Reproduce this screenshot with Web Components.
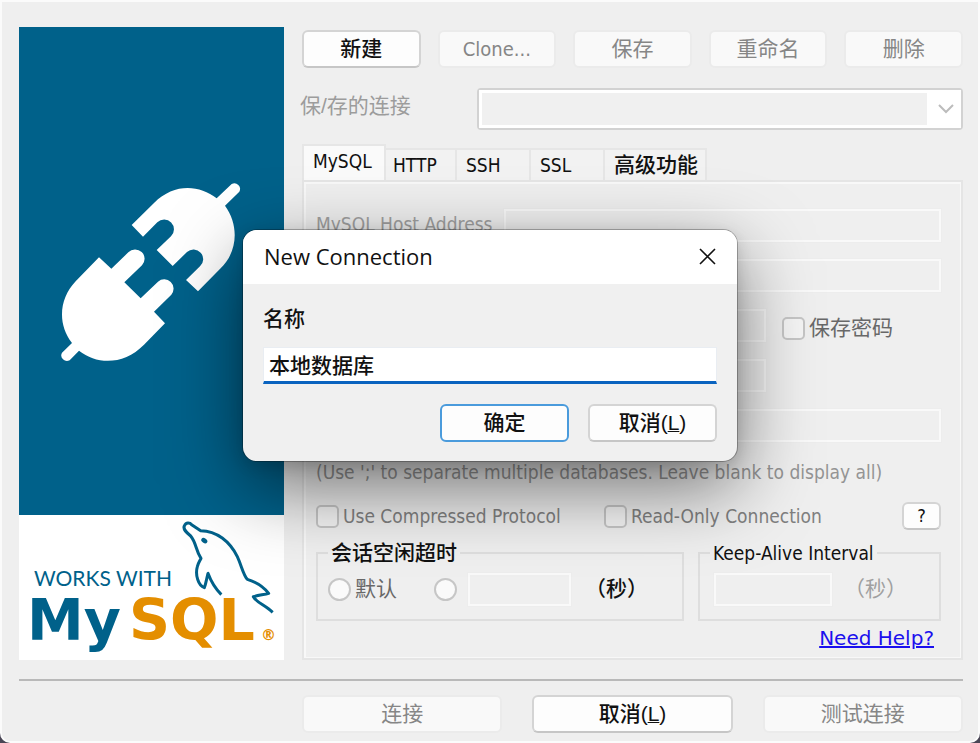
<!DOCTYPE html>
<html lang="zh-CN">
<head>
<meta charset="utf-8">
<title>MySQL Connection</title>
<style>
  html { background: #4a4655; }
  body { margin: 0; font: 19px/24px "DejaVu Sans Condensed", "Noto Sans CJK SC", sans-serif; color: #111; }
</style>
</head>
<body>
<connection-window></connection-window>
<script>
const define = (name, html, setup) => customElements.define(name, class extends HTMLElement {
  constructor() {
    super();
    const t = document.createElement('template');
    t.innerHTML = html;
    this.attachShadow({ mode: 'open' }).append(t.content.cloneNode(true));
  }
  connectedCallback() { if (setup) setup(this, this.shadowRoot); }
});
const cjk = '"Liberation Sans", "Noto Sans CJK SC", sans-serif';

define('push-button', `
<style>
  :host { display: block; }
  button { box-sizing: border-box; width: 100%; height: 38px; padding: 0; display: block;
    border: 2px solid #d4d4d4; border-bottom-color: #c6c6c6; border-radius: 6px; background: #fdfdfd;
    font-family: ${cjk}; font-size: 21px; font-weight: 500; line-height: 34px; color: #111; }
  button:disabled { background: #f9f9f9; border-color: #ebebeb; color: #868686; font-weight: 400; }
  :host([latin]) button { font-family: inherit; font-size: 20px; line-height: 32px; }
  :host([primary]) button { border-color: #4a9bdc; }
  :host([small]) button { height: 28px; line-height: 24px; font-family: inherit; font-size: 18px; }
</style>
<button type="button"><slot></slot></button>`, (el, root) => {
  root.querySelector('button').disabled = el.hasAttribute('disabled');
});

define('brand-panel', `
<style>
  :host { display: flex; flex-direction: column; }
  .plug { flex: 1; background: #00618a; display: grid; place-items: center; }
  .logo { background: #fff; height: 145px; }
  svg { display: block; }
</style>
<div class="plug">
  <svg width="185" height="185" viewBox="180 540 555 555" fill="#fff">
    <path d="M398 678L465 612C525 552 600 557 653 598L698 555A17 17 0 0 1 721 578L678 620C722 680 715 760 665 808L597 877L561 843L603 802A28 28 0 0 0 564 759L521 801L473 753L516 712A28 28 0 0 0 475 670L432 713Z"/>
    <path d="M300 775L337 809L388 760A28 28 0 0 1 429 799L376 850L425 898L477 848A28 28 0 0 1 517 887L465 938L498 973L435 1037C375 1098 295 1098 240 1055L212 1084A17 17 0 0 1 189 1061L219 1032C175 975 180 900 230 847Z"/>
  </svg>
</div>
<div class="logo">
  <svg width="265" height="145" viewBox="0 0 265 145">
    <text x="15" y="71" font-family="Lato, sans-serif" font-size="21" fill="#00618a">WORKS WITH</text>
    <text x="8" y="125" font-family="DejaVu Sans, sans-serif" font-weight="bold" font-size="57" fill="#00618a">My</text>
    <text x="110" y="125" font-family="DejaVu Sans, sans-serif" font-weight="bold" font-size="57" fill="#e48e00">SQL</text>
    <text x="242" y="125" font-family="DejaVu Sans, sans-serif" font-weight="bold" font-size="15" fill="#e48e00">®</text>
    <g transform="translate(-19 -15) scale(.33333)" fill="none" stroke="#00618a" stroke-width="9" stroke-linejoin="round">
      <path d="M664 284C645 265 635 250 624 220C620 235 618 250 613 263C595 257 585 225 592 200C595 188 600 182 603 175C586 150 590 130 572 108C560 98 548 88 553 78C558 66 570 68 575 74L602 92C650 92 690 125 712 170C725 198 730 225 742 238C765 245 790 260 806 280C795 284 775 285 760 290C770 308 795 315 818 337"/>
      <ellipse cx="613" cy="122" rx="10" ry="7" transform="rotate(35 613 122)" fill="#00618a" stroke="none"/>
    </g>
  </svg>
</div>`);

define('saved-connections', `
<style>
  :host { display: grid; grid-template-columns: 175px 1fr; align-items: start; }
  label { color: #9c9c9c; font-family: ${cjk}; font-size: 21px; line-height: 36px; margin-left: -2px; }
  .box { display: grid; align-items: center; box-sizing: border-box; height: 42px; border: 2px solid #d2d2d2; border-radius: 4px; background: #fff; }
  select, svg { grid-area: 1 / 1; }
  select { appearance: none; width: 100%; height: 38px; margin: 0; padding: 0; border: 3px solid #fff; border-right-width: 34px; background: #f0f0f0; font: inherit; opacity: 1; }
  svg { justify-self: end; margin-right: 7px; }
</style>
<label for="s">保/存的连接</label>
<div class="box">
  <select id="s" disabled></select>
  <svg width="16" height="10" viewBox="0 0 16 10" fill="none" stroke="#bcbcbc" stroke-width="2"><path d="M1 1L8 8L15 1"/></svg>
</div>`);

define('tab-strip', `
<style>
  :host { display: block; }
  nav { display: flex; align-items: flex-end; }
  button { box-sizing: border-box; height: 32px; min-width: 74px; margin: 0; padding: 0 7px 0 9px; text-align: left;
    border: 2px solid #e6e6e6; border-width: 2px 2px 0 0; background: #f2f2f2; font: inherit; line-height: 28px; color: #111; }
  button[aria-selected=true] { height: 36px; min-width: 84px; padding-bottom: 4px; background: #fafafa; border-left-width: 2px; }
  button:nth-child(2) { padding-left: 7px; min-width: 71px; }
  button:last-child { font-size: 21px; font-family: ${cjk}; font-weight: 500; }
</style>
<nav role="tablist">
  <button role="tab" aria-selected="true">MySQL</button><button role="tab">HTTP</button><button role="tab">SSH</button><button role="tab">SSL</button><button role="tab">高级功能</button>
</nav>`);

define('choice-item', `
<style>
  :host { display: block; color: #808080; }
  label { display: flex; align-items: center; gap: 4px; }
  input { appearance: none; box-sizing: border-box; width: 23px; height: 23px; margin: 0; flex: none; border: 2px solid #c6c6c6; border-radius: 5px; background: #fafafa88; }
  input[type=radio] { border-radius: 50%; background: #fafafa; }
  :host([cjk]) { font-family: ${cjk}; font-size: 21px; color: #686868; }
</style>
<label><input disabled><slot></slot></label>`, (el, root) => {
  const i = root.querySelector('input');
  i.type = el.getAttribute('kind') || 'checkbox';
  if (el.hasAttribute('aria-label')) i.setAttribute('aria-label', el.getAttribute('aria-label'));
});

define('text-field', `
<style>
  :host { display: block; }
  input { display: block; box-sizing: border-box; width: 100%; height: 33px; margin: 0; padding: 0 4px; border: 2px solid #f9f9f9; background: transparent; font: inherit; outline: 1px solid #ebebeb80; }
</style>
<input type="text" disabled>`, (el, root) => {
  root.querySelector('input').setAttribute('aria-label', el.getAttribute('name'));
});

define('group-box', `
<style>
  :host { display: block; }
  fieldset { box-sizing: border-box; min-width: 0; height: 80px; margin: 0; padding: 0 10px; border: 2px solid #dedede; }
  legend { padding: 0 3px; line-height: 24px; }
  :host([cjk]) legend { font-family: ${cjk}; font-size: 21px; font-weight: 500; }
  .row { display: flex; align-items: center; height: 48px; }
</style>
<fieldset><legend><slot name="title"></slot></legend><div class="row"><slot></slot></div></fieldset>`);

define('mysql-form', `
<style>
  :host { display: block; box-sizing: border-box; border: 2px solid #e5e5e5; box-shadow: inset 2px 2px #f8f8f8, inset -1px -1px #f8f8f8; padding: 27px 20px 8px 12px; }
  .fields { display: grid; grid-template-columns: 188px 262px 1fr; row-gap: 17px; align-items: center; }
  .fields > .label { color: #a0a0a0; padding-bottom: 3px; }
  .wide { grid-column: 2 / 4; }
  .mid { grid-column: 2; }
  .pass { margin: 5px 0 0 16px; }
  .hint { margin: 18px 0 0; color: #949494; white-space: nowrap; }
  .checks { display: grid; grid-template-columns: 288px 1fr 39px; align-items: center; margin-top: 18px; }
  .groups { display: grid; grid-template-columns: 368fr 243fr; gap: 14px; margin-top: 11px; }
  .sec { margin-left: 14px; font-family: ${cjk}; font-size: 21px; font-weight: 500; color: #111; white-space: nowrap; }
  .dim { margin-left: 12px; color: #a0a0a0; font-weight: 400; }
  .w1 { width: 103px; margin-left: 11px; }
  .w2 { width: 118px; margin-left: 4px; }
  .second { margin-left: 37px; }
  .help { text-align: right; margin: 5px 7px 0 0; }
  a { color: #1b10ee; font: 20px/24px "DejaVu Sans", sans-serif; text-decoration-thickness: 2px; }
</style>
<div class="fields">
  <span class="label">MySQL Host Address</span><text-field class="wide" name="MySQL Host Address"></text-field>
  <text-field class="wide" name="用户名"></text-field>
  <text-field class="mid" name="密码"></text-field><choice-item class="pass" cjk>保存密码</choice-item>
  <text-field class="mid" name="端口"></text-field>
  <text-field class="wide" name="数据库"></text-field>
</div>
<p class="hint">(Use ';' to separate multiple databases. Leave blank to display all)</p>
<div class="checks">
  <choice-item>Use Compressed Protocol</choice-item>
  <choice-item>Read-Only Connection</choice-item>
  <push-button small>?</push-button>
</div>
<div class="groups">
  <group-box cjk><span slot="title">会话空闲超时</span>
    <choice-item kind="radio" cjk>默认</choice-item>
    <choice-item kind="radio" class="second" aria-label="自定义"></choice-item>
    <text-field class="w1" name="会话空闲超时"></text-field><span class="sec">（秒）</span>
  </group-box>
  <group-box><span slot="title">Keep-Alive Interval</span>
    <text-field class="w2" name="Keep-Alive Interval"></text-field><span class="sec dim">（秒）</span>
  </group-box>
</div>
<div class="help"><a href="#help">Need Help?</a></div>`);

define('name-dialog', `
<style>
  :host { display: block; width: 494px; box-sizing: border-box; border-radius: 14px; overflow: hidden; background: #f0f0f0; font-family: ${cjk};
    box-shadow: 0 0 0 1px #0004, 0 26px 76px #00000088, 0 4px 16px #0002; }
  header { display: flex; align-items: center; justify-content: space-between; box-sizing: border-box; height: 54px; padding: 0 12px 2px 21px; background: #fff; }
  h1 { margin: 0; font: 22px/30px "Open Sans", sans-serif; color: #111; }
  .close { border: 0; background: none; padding: 9px; display: block; }
  svg { display: block; }
  .body { padding: 20px 20px 19px; }
  label { display: block; font-size: 21px; font-weight: 500; line-height: 30px; }
  input { display: block; box-sizing: border-box; width: 100%; height: 37px; margin-top: 13px; padding: 0 5px 2px; border: 1px solid #e9edf2; border-bottom: 3px solid #0a63bf; font: inherit; font-size: 21px; font-weight: 500; color: #111; background: #fff; outline: 0; border-radius: 0; }
  footer { display: flex; justify-content: flex-end; gap: 19px; margin-top: 20px; }
  push-button { width: 129px; }
</style>
<header><h1>New Connection</h1>
  <button class="close" type="button" aria-label="Close"><svg width="17" height="17" viewBox="0 0 17 17" stroke="#111" stroke-width="1.6"><path d="M1 1L16 16M16 1L1 16"/></svg></button>
</header>
<div class="body">
  <label for="n">名称</label>
  <input id="n" type="text" value="本地数据库">
  <footer><push-button primary>确定</push-button><push-button>取消(<u style="text-decoration-thickness:1px">L</u>)</push-button></footer>
</div>`);

define('connection-window', `
<style>
  :host { display: block; position: relative; box-sizing: border-box; min-height: 100vh; background: #efefef;
    border: 2px solid #fbfbfb; border-radius: 0 0 10px 10px; padding: 25px 15px 7px 17px; }
  main { display: grid; grid-template-columns: 265px 1fr; column-gap: 18px; }
  .tools { display: grid; grid-template-columns: repeat(5, 1fr); gap: 17px; padding-top: 3px; }
  saved-connections { margin-top: 20px; }
  tab-strip { margin-top: 14px; }
  .actions { display: grid; grid-template-columns: repeat(3, 1fr); gap: 30px; margin: 14px 0 0 283px; }
  hr { border: 0; border-top: 2px solid #b9b9b9; margin: 19px 0 0; }
  name-dialog { position: absolute; top: 228px; left: 50%; transform: translateX(-50%); }
</style>
<main>
  <brand-panel></brand-panel>
  <div>
    <div class="tools">
      <push-button>新建</push-button><push-button latin disabled>Clone...</push-button><push-button disabled>保存</push-button><push-button disabled>重命名</push-button><push-button disabled>删除</push-button>
    </div>
    <saved-connections></saved-connections>
    <tab-strip></tab-strip>
    <mysql-form></mysql-form>
  </div>
</main>
<hr>
<div class="actions">
  <push-button disabled>连接</push-button><push-button>取消(<u style="text-decoration-thickness:1px">L</u>)</push-button><push-button disabled>测试连接</push-button>
</div>
<name-dialog></name-dialog>`);
</script>
</body>
</html>
